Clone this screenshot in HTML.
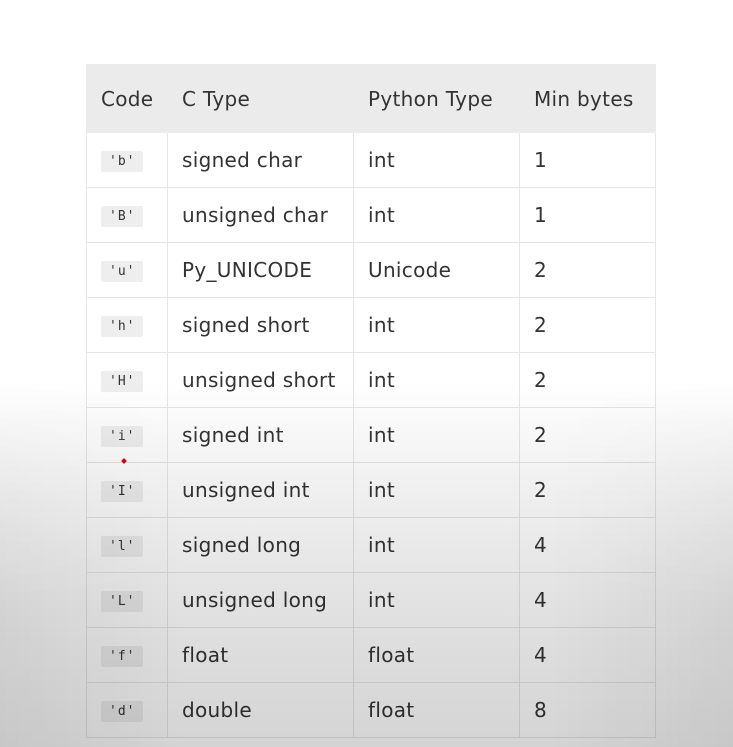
<!DOCTYPE html>
<html><head><style>
html,body{margin:0;padding:0;width:733px;height:747px;overflow:hidden;background:#fff;font-family:"DejaVu Sans","Liberation Sans",sans-serif;}
table{position:absolute;left:86px;top:64px;border-collapse:collapse;width:569px;table-layout:fixed;color:#333;font-size:20px;letter-spacing:0.3px;}
td,th{border:1px solid #e6e6e6;height:54px;padding:0 0 0 14px;text-align:left;font-weight:normal;white-space:nowrap;box-sizing:border-box;line-height:20px;}
td{height:55px;}
tr:first-child th{height:68px;background:#ebebeb;border-color:#ebebeb;}
code{font-family:"DejaVu Sans Mono","Liberation Mono",monospace;font-size:13px;letter-spacing:1px;background:#eeeeee;padding:3px 8px;border-radius:2px;}
.ov{position:absolute;left:0;top:0;width:733px;height:747px;pointer-events:none;
background:linear-gradient(to bottom,rgba(0,0,0,0) 0,rgba(0,0,0,0) 380px,rgba(0,0,0,0.05) 470px,rgba(0,0,0,0.12) 620px,rgba(0,0,0,0.17) 747px);}
.ov2{position:absolute;left:0;top:0;width:733px;height:747px;pointer-events:none;
background:linear-gradient(to right,rgba(0,0,0,0.06),rgba(0,0,0,0) 25%,rgba(0,0,0,0) 75%,rgba(0,0,0,0.06));
-webkit-mask:linear-gradient(to bottom,transparent 380px,#000 600px);}
.dot{position:absolute;left:122px;top:459px;width:4px;height:4px;background:#d00;transform:rotate(45deg);}
</style></head><body>
<table>
<colgroup><col style="width:81px"><col style="width:186px"><col style="width:166px"><col style="width:136px"></colgroup>
<tr><th>Code</th><th>C Type</th><th>Python Type</th><th>Min bytes</th></tr>
<tr><td><code>'b'</code></td><td>signed char</td><td>int</td><td>1</td></tr>
<tr><td><code>'B'</code></td><td>unsigned char</td><td>int</td><td>1</td></tr>
<tr><td><code>'u'</code></td><td>Py_UNICODE</td><td>Unicode</td><td>2</td></tr>
<tr><td><code>'h'</code></td><td>signed short</td><td>int</td><td>2</td></tr>
<tr><td><code>'H'</code></td><td>unsigned short</td><td>int</td><td>2</td></tr>
<tr><td><code>'i'</code></td><td>signed int</td><td>int</td><td>2</td></tr>
<tr><td><code>'I'</code></td><td>unsigned int</td><td>int</td><td>2</td></tr>
<tr><td><code>'l'</code></td><td>signed long</td><td>int</td><td>4</td></tr>
<tr><td><code>'L'</code></td><td>unsigned long</td><td>int</td><td>4</td></tr>
<tr><td><code>'f'</code></td><td>float</td><td>float</td><td>4</td></tr>
<tr><td><code>'d'</code></td><td>double</td><td>float</td><td>8</td></tr>
</table>
<div class="dot"></div>
<div class="ov"></div><div class="ov2"></div>
</body></html>
